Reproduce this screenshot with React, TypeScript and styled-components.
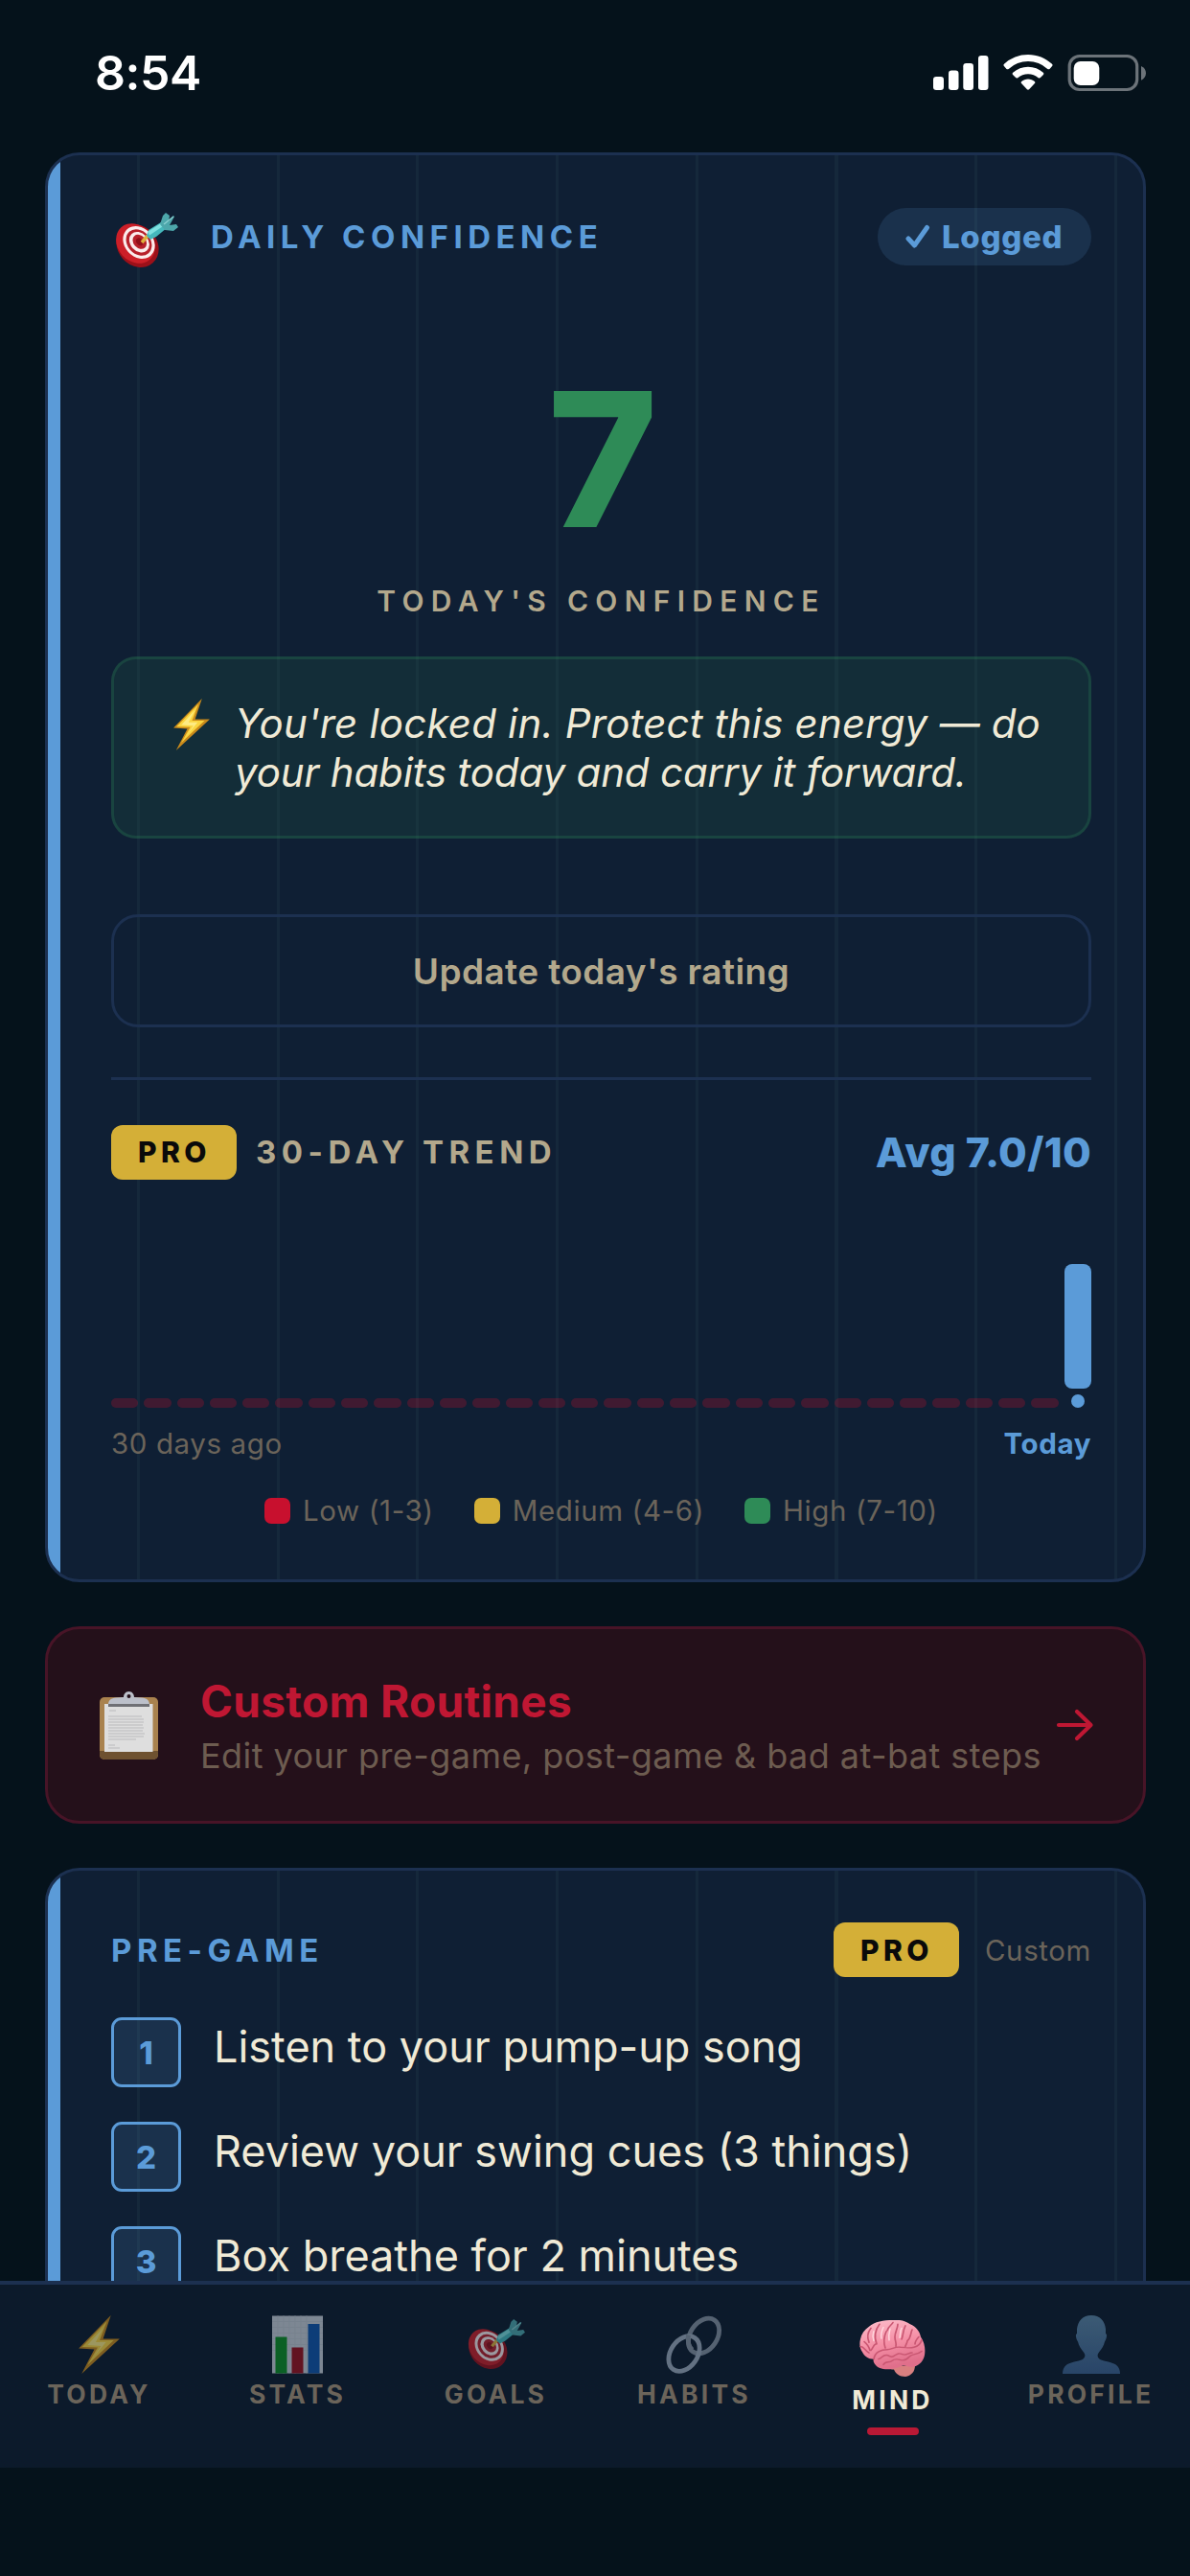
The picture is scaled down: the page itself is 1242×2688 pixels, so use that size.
import React from "react";
import styled, { createGlobalStyle } from "styled-components";

const GlobalStyle = createGlobalStyle`
  * {
    box-sizing: border-box;
  }
  body {
    margin: 0;
    background: #05121b;
    font-family: Inter, "Liberation Sans", sans-serif;
    -webkit-font-smoothing: antialiased;
  }
`;

const BLUE = "#5b9bd8";
const RED = "#c8102e";
const GOLD = "#d4af37";
const GREEN = "#2e8b57";
const CREAM = "#f0ead6";
const TAN = "#b3a88c";
const DIM = "#6b645a";
const LINE = "#1c3050";

const Screen = styled.div`
  display: flex;
  flex-direction: column;
  width: 1242px;
  height: 2688px;
  overflow: hidden;
  background: #05121b;
`;

const StatusBar = styled.header`
  display: flex;
  flex: none;
  align-items: flex-start;
  justify-content: space-between;
  height: 159px;
  padding: 50px 46px 0 99px;

  svg {
    margin-top: 5px;
  }
`;

const Clock = styled.div`
  font-size: 50px;
  line-height: 52px;
  font-weight: 600;
  letter-spacing: -0.5px;
  color: #fff;
`;

const Feed = styled.main`
  display: flex;
  flex-direction: column;
  flex: 1;
  gap: 46px;
  min-height: 0;
  padding: 0 46px 0 47px;
  overflow: hidden;
`;

const Card = styled.section<{ $height: number; $top: number }>`
  display: flex;
  flex-direction: column;
  flex: none;
  height: ${p => p.$height}px;
  padding: ${p => p.$top}px 54px 0 66px;
  border: 3px solid ${LINE};
  border-radius: 36px;
  background-color: #0f1f34;
  background-image:
    linear-gradient(90deg, ${BLUE} 13px, transparent 13px),
    repeating-linear-gradient(90deg, transparent 0 93px, #15283b 93px 96px, transparent 96px 145.7px);
  overflow: hidden;
`;

const Row = styled.div`
  display: flex;
  align-items: center;
  justify-content: space-between;
`;

const CardHead = styled(Row)<{ $height: number }>`
  height: ${p => p.$height}px;
`;

const HeadGroup = styled.div<{ $gap: number }>`
  display: flex;
  align-items: center;
  gap: ${p => p.$gap}px;
`;

const Heading = styled.h2<{ $tone?: string }>`
  margin: 0;
  font-size: 33px;
  line-height: 40px;
  font-weight: 700;
  letter-spacing: 5.5px;
  text-transform: uppercase;
  color: ${p => p.$tone ?? BLUE};
`;

const TargetSlot = styled.div`
  display: flex;
  margin: 8px 0 0 3px;
`;

const LoggedPill = styled.div`
  display: flex;
  align-items: center;
  width: 223px;
  height: 60px;
  padding-left: 29px;
  gap: 12px;
  border-radius: 30px;
  background: rgba(91, 155, 216, 0.15);
  font-size: 33px;
  font-weight: 800;
  letter-spacing: 0.7px;
  color: ${BLUE};
`;

const Score = styled.div`
  margin-top: 106px;
  padding-left: 3px;
  font-size: 195px;
  line-height: 192px;
  font-weight: 800;
  text-align: center;
  color: ${GREEN};
`;

const ScoreLabel = styled.div`
  margin-top: 34px;
  font-size: 30px;
  line-height: 36px;
  font-weight: 600;
  letter-spacing: 7.3px;
  text-align: center;
  text-transform: uppercase;
  color: ${TAN};
`;

const Message = styled.div`
  display: flex;
  flex: none;
  height: 190px;
  margin-top: 40px;
  padding: 41px 0 0 61px;
  gap: 25px;
  border: 3px solid rgba(46, 139, 87, 0.25);
  border-radius: 26px;
  background: rgba(46, 139, 87, 0.13);
`;

const MessageText = styled.p`
  margin: 0;
  font-size: 42px;
  line-height: 51px;
  font-style: italic;
  white-space: nowrap;
  color: ${CREAM};
`;

const MessageLine = styled.span<{ $spacing: number }>`
  display: block;
  letter-spacing: ${p => p.$spacing}px;
`;

const UpdateButton = styled.button`
  flex: none;
  height: 118px;
  margin-top: 79px;
  padding: 0;
  border: 3px solid ${LINE};
  border-radius: 28px;
  background: transparent;
  font-family: inherit;
  font-size: 37px;
  font-weight: 600;
  letter-spacing: 0.4px;
  color: ${TAN};
`;

const Divider = styled.hr`
  flex: none;
  width: 100%;
  height: 3px;
  margin: 52px 0 46px;
  border: 0;
  background: ${LINE};
`;

const ProBadge = styled.span`
  display: flex;
  align-items: center;
  justify-content: center;
  width: 131px;
  height: 57px;
  padding-left: 1px;
  border-radius: 12px;
  background: ${GOLD};
  font-size: 30px;
  font-weight: 800;
  letter-spacing: 4.4px;
  color: #0a0a0a;
`;

const Average = styled.div`
  font-size: 43px;
  line-height: 50px;
  font-weight: 800;
  letter-spacing: 0.3px;
  color: ${BLUE};
`;

const Chart = styled.div`
  display: flex;
  flex: none;
  align-items: flex-end;
  gap: 6px;
  height: 198px;
  margin-top: 40px;
`;

const Day = styled.div`
  display: flex;
  flex: 1;
  flex-direction: column;
  align-items: center;
  gap: 6px;
`;

const Bar = styled.div<{ $today: boolean }>`
  width: 100%;
  border-radius: ${p => (p.$today ? 8 : 5)}px;
  background: ${p => (p.$today ? BLUE : "rgba(200, 16, 46, 0.27)")};
`;

const TodayDot = styled.div`
  width: 14px;
  height: 14px;
  border-radius: 50%;
  background: ${BLUE};
`;

const Axis = styled(Row)`
  flex: none;
  height: 36px;
  margin-top: 19px;
`;

const Caption = styled.span<{ $strong?: boolean }>`
  font-size: 29.5px;
  line-height: 36px;
  font-weight: ${p => (p.$strong ? 700 : 400)};
  letter-spacing: 0.6px;
  color: ${p => (p.$strong ? BLUE : DIM)};
`;

const Legend = styled.div`
  display: flex;
  flex: none;
  justify-content: center;
  gap: 42px;
  height: 28px;
  margin-top: 38px;
`;

const LegendItem = styled.div`
  display: flex;
  align-items: center;
  gap: 13px;
`;

const Swatch = styled.i<{ $color: string }>`
  width: 27px;
  height: 27px;
  border-radius: 7px;
  background: ${p => p.$color};
`;

const RoutineLink = styled.a`
  display: flex;
  flex: none;
  align-items: center;
  height: 206px;
  padding: 0 51px 0 54px;
  border: 3px solid #481427;
  border-radius: 36px;
  background: #24101a;
`;

const RoutineCopy = styled.div`
  display: flex;
  flex: 1;
  flex-direction: column;
  gap: 8px;
  min-width: 0;
  margin-left: 44px;
  padding-top: 1px;
  white-space: nowrap;
`;

const RoutineTitle = styled.div`
  font-size: 46px;
  line-height: 54px;
  font-weight: 700;
  letter-spacing: 0.3px;
  color: #bf1733;
`;

const RoutineHint = styled.div`
  font-size: 36px;
  line-height: 44px;
  letter-spacing: 0.45px;
  color: #6d5c50;
`;

const StepList = styled.ol`
  display: flex;
  flex-direction: column;
  gap: 36px;
  margin: 42px 0 0;
  padding: 0;
  list-style: none;
`;

const Step = styled.li`
  display: flex;
  gap: 34px;
  height: 73px;
`;

const StepNumber = styled.span`
  display: flex;
  align-items: center;
  justify-content: center;
  width: 73px;
  height: 73px;
  border: 3.5px solid ${BLUE};
  border-radius: 11px;
  background: rgba(91, 155, 216, 0.15);
  font-size: 33px;
  font-weight: 800;
  color: ${BLUE};
`;

const StepText = styled.span`
  margin-top: 5px;
  font-size: 45px;
  line-height: 52px;
  color: ${CREAM};
`;

const TabBar = styled.nav`
  display: flex;
  flex: none;
  height: 195px;
  margin-bottom: 113px;
  border-top: 4px solid ${LINE};
  background: #0c1a2b;
`;

const Tab = styled.div<{ $active: boolean }>`
  display: flex;
  flex: 1;
  flex-direction: column;
  align-items: center;
  padding-top: ${p => (p.$active ? 37 : 32)}px;

  svg {
    opacity: ${p => (p.$active ? 1 : 0.6)};
  }
`;

const TabLabel = styled.span<{ $active: boolean }>`
  margin-top: ${p => (p.$active ? 8 : 5)}px;
  font-size: 26.5px;
  line-height: 32px;
  font-weight: 700;
  letter-spacing: 3.2px;
  color: ${p => (p.$active ? CREAM : DIM)};
`;

const TabMarker = styled.i`
  width: 54px;
  height: 8px;
  margin-top: 13px;
  border-radius: 4px;
  background: #b91935;
`;

const StatusIcons = () => (
  <svg width="225" height="42" viewBox="970 55 225 42">
    <g fill="#fff">
      <rect x="973" y="80" width="11" height="14" rx="3.2" />
      <rect x="989" y="73.5" width="10.5" height="20.5" rx="3.2" />
      <rect x="1004.3" y="66" width="10.7" height="28" rx="3.2" />
      <rect x="1020" y="58" width="10.5" height="36" rx="3.2" />
      <path d="M1072 57c9.6 0 18.400 3.700 25 9.800.7.700.7 1.600.1 2.300l-2.600 2.800c-.6.600-1.500.600-2.200 0a30 30 0 0 0-40.600 0c-.7.600-1.600.600-2.200 0l-2.600-2.800c-.6-.7-.6-1.600.1-2.300A36.800 36.800 0 0 1 1072 57z" />
      <path d="M1072 69.800c6 0 11.500 2.200 15.800 6 .7.600.7 1.500.1 2.200l-3 3.100c-.6.600-1.500.600-2.200.1a16.200 16.200 0 0 0-21.400 0c-.7.500-1.600.500-2.200-.1l-3-3.100c-.6-.7-.6-1.600.1-2.200a23.800 23.800 0 0 1 15.800-6z" />
      <path d="M1072 82.500c2.600 0 4.900.9 6.800 2.400.7.600.7 1.500.1 2.200l-5.800 6.100c-.6.600-1.600.600-2.200 0l-5.800-6.100c-.6-.7-.6-1.600.1-2.200 1.900-1.500 4.200-2.400 6.800-2.400z" />
      <rect x="1119.700" y="64" width="26.600" height="25" rx="7" />
    </g>
    <rect x="1115.200" y="58.500" width="70.500" height="35" rx="10.500" fill="none" stroke="#6c7379" strokeWidth="3.200" />
    <path d="M1190 69c3 1.200 5 4 5 7.300s-2 6.200-5 7.400z" fill="#6c7379" />
  </svg>
);

interface IconProps {
  width: number;
  height: number;
}

const TargetIcon: React.FC<IconProps> = ({ width, height }) => (
  <svg width={width} height={height} viewBox="0 0 67 58">
    <ellipse cx="24.500" cy="34.500" rx="20.500" ry="24" fill="#9c1019" transform="rotate(-42 24.500 34.500)" />
    <ellipse cx="22.500" cy="32" rx="18.500" ry="22.500" fill="#cc1f28" transform="rotate(-42 22.500 32)" />
    <g transform="rotate(-42 26 31)">
      <ellipse cx="26" cy="31" rx="15" ry="18.500" fill="#fbecec" />
      <ellipse cx="26" cy="31" rx="12" ry="15" fill="#b7202a" />
      <ellipse cx="26.500" cy="31" rx="9.300" ry="11.800" fill="#fbecec" />
      <ellipse cx="27" cy="31" rx="6.400" ry="8.200" fill="#b7202a" />
      <ellipse cx="27" cy="31" rx="3.200" ry="4.200" fill="#8f0f18" />
    </g>
    <path d="M29 31l6-7" stroke="#e0b03c" strokeWidth="3.500" />
    <path d="M34 24l2-6 13-8 6 6-11 9-6 3z" fill="#45b8bc" />
    <path d="M35 20l14-9 3 2.500-15 10z" fill="#7ee0e0" />
    <path d="M48 12l3-9 3-3 4 3-1 6 5-6 1 1-5 9 7-1 2 3-5 4-9-1z" fill="#4da7ab" />
    <path d="M52 12l10-8" stroke="#8ad0d2" strokeWidth="1.500" />
  </svg>
);

const BoltIcon: React.FC<IconProps> = ({ width, height }) => (
  <svg width={width} height={height} viewBox="0 0 42 60">
    <path d="M33 0L0 34l16 1L3 60l39-36H25z" fill="#c98a1b" />
    <path d="M29 6L3.500 32.500l16 .5L9 51l27-25.500H21.500z" fill="#fad53f" />
    <path d="M25 13L9 30.500l14 1L15 43l13-15.500H17.500z" fill="#fdeb83" />
  </svg>
);

const ChartIcon: React.FC<IconProps> = ({ width, height }) => (
  <svg width={width} height={height} viewBox="0 0 53 60">
    <rect width="53" height="60" fill="#c9d0d8" />
    <path d="M0 6h53M0 12h53M0 18h53M0 24h53M0 30h53M0 36h53M6 0v60M12 0v60M18 0v60M24 0v60M30 0v60M36 0v60" stroke="#bfc7d1" strokeWidth="1" />
    <rect x="3.500" y="22" width="12" height="38" fill="#0b8f22" />
    <rect x="20.500" y="33" width="12" height="27" fill="#9c0f1c" />
    <rect x="37.500" y="8.500" width="12" height="51.500" fill="#0e55ab" />
  </svg>
);

const LinkIcon: React.FC<IconProps> = ({ width, height }) => (
  <svg width={width} height={height} viewBox="0 0 61 60" fill="none">
    <ellipse cx="40.500" cy="21" rx="14" ry="20" transform="rotate(34 40.500 21)" stroke="#8792a1" strokeWidth="4.800" />
    <ellipse cx="20" cy="39.500" rx="14" ry="20" transform="rotate(34 20 39.500)" stroke="#9dabbc" strokeWidth="4.800" />
    {/* far ring comes back over the near one where they interlock */}
    <path d="M24.500 20c-1 6 .5 12 4 15.500" stroke="#8792a1" strokeWidth="4.800" />
  </svg>
);

const BrainIcon: React.FC<IconProps> = ({ width, height }) => (
  <svg width={width} height={height} viewBox="0 0 69 71" preserveAspectRatio="none">
    <defs>
      <linearGradient id="brain" x1="0" y1="0" x2=".3" y2="1">
        <stop offset="0" stopColor="#fcc0cc" />
        <stop offset=".55" stopColor="#f58fa6" />
        <stop offset="1" stopColor="#e06f8b" />
      </linearGradient>
    </defs>
    <path d="M28 58c2 3 5 4 8 4 2 6 6 9 12 9 6-1 10-6 10-14z" fill="#d98080" />
    <path
      d="M35 0c7-1 13 1 18 5 6 3 10 9 11 16 4 7 5 15 4 23-1 7-5 12-10 14-4 2-8 0-12-1-3 1-7 4-11 4-8 2-16 0-19-6-1-2-2-4-1-6-6 0-10-4-12-9-3-5-3-11-2-16 1-7 4-12 9-16 6-6 15-8 25-8z"
      fill="url(#brain)"
    />
    <path
      d="M15 49c1-9 8-12 14-12 5 0 8-4 14-3 6 0 8 2 14 0 4-1 7-5 8-9M12 10c-4 6-4 12-2 18M21 5c-5 8-6 16-3 25M28 14c-3 8-3 14-1 21M35 3c-2 4-5 5-6 10M40 5c0 6-3 10-3 16 0 5 2 8 1 12M48 7c-3 7-2 12-4 17M55 12c-2 5-1 10-5 14 0 3-2 5-2 7M62 21c-3 4-4 6-4 9M5 27c3 3 5 6 6 11M12 38c2-2 2-6 5-8M20 49c4-2 4-5 8-5s4 4 8 1 5-4 9-2 6-2 10-2M25 56c2-5 6-2 9-5s6-2 9-1 6 0 9-4 8-2 13-7M1 33c4 0 5 6 9 8"
      fill="none"
      stroke="#c95772"
      strokeWidth="1.700"
      strokeLinecap="round"
    />
    <path d="M25 9c-2 5-3 9-2 14M32 11c-1 5-2 8-1 14M44 10c-2 5-1 8-2 12M15 14c-1 4-2 6 0 12" fill="none" stroke="#ffd6dd" strokeWidth="1.500" strokeLinecap="round" />
  </svg>
);

const ProfileIcon: React.FC<IconProps> = ({ width, height }) => (
  <svg width={width} height={height} viewBox="0 0 60 73" preserveAspectRatio="none">
    <defs>
      <linearGradient id="bust" x1="0" y1="0" x2="0" y2="1">
        <stop offset="0" stopColor="#5c86a6" />
        <stop offset="1" stopColor="#3c6291" />
      </linearGradient>
    </defs>
    <path
      d="M30 0c9 0 14 7 15 17v6c2 0 1 6-1 10-1 5-3 9-6 13-2 3-2 6 1 9 5 3 13 3 17 7 3 3 4 7 4 11H0c0-4 1-8 4-11 4-4 12-4 17-7 3-3 3-6 1-9-3-4-5-8-6-13-2-4-3-10-1-10v-6C16 7 21 0 30 0z"
      fill="url(#bust)"
    />
  </svg>
);

const ClipboardIcon = () => (
  <svg width="61" height="71" viewBox="0 0 61 71">
    <rect y="6" width="61" height="65" rx="5" fill="#a9824e" />
    <path d="M0 62h61v4a5 5 0 0 1-5 5H5a5 5 0 0 1-5-5z" fill="#6e5130" />
    <rect x="5" y="13" width="50.500" height="50" fill="#dedede" />
    <path d="M10 20h7M9 26h35M9 29h37M9 32h37M9 35h36M9 38h37M9 41h36M9 44h38M9 47h37M9 50h29M9 56h7M9 59h12" stroke="#c6c6c8" strokeWidth="1.600" />
    <path d="M9 14c0-5 3-7 8-7.500l8-.5c0-3 2-6 5.500-6S36 3 36 6l8 .5c5 .5 8 2.500 8 7.500z" fill="#bcc0ca" />
    <path d="M9 13h43v3H9z" fill="#6f7075" />
    <circle cx="30.500" cy="5" r="2" fill="#24101a" />
  </svg>
);

const CheckIcon = () => (
  <svg width="26" height="26" viewBox="0 0 26 26" fill="none" stroke={BLUE} strokeWidth="5" strokeLinecap="round" strokeLinejoin="round">
    <path d="M3 15l6.500 7L22.500 3.500" />
  </svg>
);

const ArrowIcon = () => (
  <svg width="40" height="34" viewBox="0 0 40 34" fill="none" stroke="#bf1733" strokeWidth="4.200" strokeLinecap="round" strokeLinejoin="round">
    <path d="M3 17h33M22 3l14.500 14L22 31" />
  </svg>
);

// confidence per day, oldest first; 0 means nothing was logged
const trend = [...Array(29).fill(0), 7];

const barHeight = (rating: number) => (rating === 0 ? 10 : Math.round((rating / 10) * 186));

const legend = [
  { label: "Low (1-3)", color: RED },
  { label: "Medium (4-6)", color: GOLD },
  { label: "High (7-10)", color: GREEN },
];

const steps = ["Listen to your pump-up song", "Review your swing cues (3 things)", "Box breathe for 2 minutes"];

const tabs = [
  { label: "TODAY", icon: <BoltIcon width={43} height={61} /> },
  { label: "STATS", icon: <ChartIcon width={53} height={61} /> },
  { label: "GOALS", icon: <TargetIcon width={61} height={61} /> },
  { label: "HABITS", icon: <LinkIcon width={61} height={61} /> },
  { label: "MIND", icon: <BrainIcon width={69} height={59} />, active: true },
  { label: "PROFILE", icon: <ProfileIcon width={60} height={61} /> },
];

const ConfidenceCard = () => (
  <Card $height={1492} $top={55}>
    <CardHead $height={60}>
      <HeadGroup $gap={34}>
        <TargetSlot>
          <TargetIcon width={67} height={58} />
        </TargetSlot>
        <Heading>Daily Confidence</Heading>
      </HeadGroup>
      <LoggedPill>
        <CheckIcon />
        Logged
      </LoggedPill>
    </CardHead>
    <Score>7</Score>
    <ScoreLabel>Today's Confidence</ScoreLabel>
    <Message>
      <BoltIcon width={40} height={54} />
      <MessageText>
        <MessageLine $spacing={0.2}>You're locked in. Protect this energy — do</MessageLine>
        <MessageLine $spacing={-0.15}>your habits today and carry it forward.</MessageLine>
      </MessageText>
    </Message>
    <UpdateButton>Update today's rating</UpdateButton>
    <Divider />
    <CardHead $height={58}>
      <HeadGroup $gap={20}>
        <ProBadge>PRO</ProBadge>
        <Heading $tone={TAN}>30-Day Trend</Heading>
      </HeadGroup>
      <Average>Avg 7.0/10</Average>
    </CardHead>
    <Chart>
      {trend.map((rating, i) => {
        const today = i === trend.length - 1;
        return (
          <Day key={i}>
            <Bar $today={today} style={{ height: barHeight(rating) }} />
            {today && <TodayDot />}
          </Day>
        );
      })}
    </Chart>
    <Axis>
      <Caption>30 days ago</Caption>
      <Caption $strong>Today</Caption>
    </Axis>
    <Legend>
      {legend.map(({ label, color }) => (
        <LegendItem key={label}>
          <Swatch $color={color} />
          <Caption>{label}</Caption>
        </LegendItem>
      ))}
    </Legend>
  </Card>
);

const PreGameCard = () => (
  <Card $height={900} $top={54}>
    <CardHead $height={57}>
      <Heading>Pre-Game</Heading>
      <HeadGroup $gap={27}>
        <ProBadge>PRO</ProBadge>
        <Caption>Custom</Caption>
      </HeadGroup>
    </CardHead>
    <StepList>
      {steps.map((step, i) => (
        <Step key={step}>
          <StepNumber>{i + 1}</StepNumber>
          <StepText>{step}</StepText>
        </Step>
      ))}
    </StepList>
  </Card>
);

const App: React.FC = () => (
  <Screen>
    <GlobalStyle />
    <StatusBar>
      <Clock>8:54</Clock>
      <StatusIcons />
    </StatusBar>
    <Feed>
      <ConfidenceCard />
      <RoutineLink>
        <ClipboardIcon />
        <RoutineCopy>
          <RoutineTitle>Custom Routines</RoutineTitle>
          <RoutineHint>Edit your pre-game, post-game &amp; bad at-bat steps</RoutineHint>
        </RoutineCopy>
        <ArrowIcon />
      </RoutineLink>
      <PreGameCard />
    </Feed>
    <TabBar>
      {tabs.map(({ label, icon, active = false }) => (
        <Tab key={label} $active={active}>
          {icon}
          <TabLabel $active={active}>{label}</TabLabel>
          {active && <TabMarker />}
        </Tab>
      ))}
    </TabBar>
  </Screen>
);

export default App;
